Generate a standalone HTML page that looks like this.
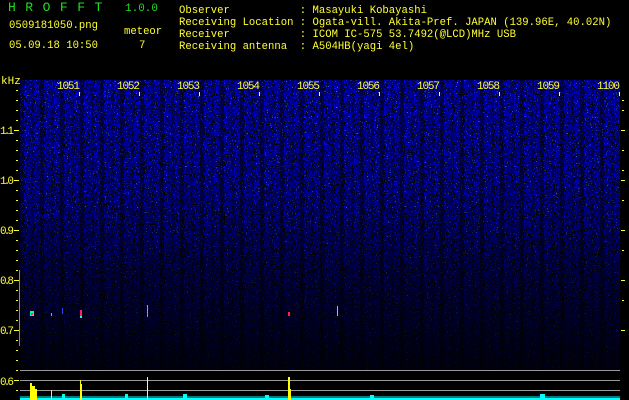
<!DOCTYPE html>
<html><head><meta charset="utf-8"><style>
html,body{margin:0;padding:0;background:#000;width:629px;height:400px;overflow:hidden}
body{position:relative;font-family:"Liberation Mono","DejaVu Sans Mono",monospace;color:#ffff33}
.t{position:absolute;white-space:pre;font-size:10.6px;line-height:12px}
.g{color:#22dd22;font-size:13px}
</style></head><body>
<div class="t g" style="left:8px;top:2px;letter-spacing:9.5px">HROFFT</div>
<div class="t g" style="left:125px;top:3px;font-size:11px">1.0.0</div>
<div class="t" style="left:9px;top:20px">0509181050.png</div>
<div class="t" style="left:124px;top:26px">meteor</div>
<div class="t" style="left:139px;top:40px">7</div>
<div class="t" style="left:9px;top:40px">05.09.18 10:50</div>
<div class="t" style="left:179px;top:5px">Observer           : Masayuki Kobayashi</div>
<div class="t" style="left:179px;top:17px">Receiving Location : Ogata-vill. Akita-Pref. JAPAN (139.96E, 40.02N)</div>
<div class="t" style="left:179px;top:29px">Receiver           : ICOM IC-575 53.7492(@LCD)MHz USB</div>
<div class="t" style="left:179px;top:41px">Receiving antenna  : A504HB(yagi 4el)</div>
<svg width="629" height="400" style="position:absolute;left:0;top:0">
<defs>
<filter id="n" x="0" y="0" width="100%" height="100%">
<feTurbulence type="fractalNoise" baseFrequency="0.9 0.9" numOctaves="1" seed="3"/>
<feColorMatrix values="0 0 0 0 0  0 0 0 0 0  4.5 0 0 0 -1.9  0 0 0 0 1"/>
</filter>
<filter id="s" x="0" y="0" width="100%" height="100%">
<feTurbulence type="fractalNoise" baseFrequency="0.8" numOctaves="1" seed="9"/>
<feColorMatrix values="0 0 0 0 0.1  0 0 0 0 0.75  0 0 0 0 1  0 0 0 30 -21"/>
</filter>
<linearGradient id="fade" x1="0" y1="0" x2="0" y2="1">
<stop offset="0" stop-color="#000" stop-opacity="0.05"/>
<stop offset="0.4" stop-color="#000" stop-opacity="0.25"/>
<stop offset="0.65" stop-color="#000" stop-opacity="0.6"/>
<stop offset="1" stop-color="#000" stop-opacity="0.9"/>
</linearGradient>
<pattern id="str" width="20" height="10" patternUnits="userSpaceOnUse">
<rect x="0" y="0" width="4" height="10" fill="#000" opacity="0.45"/>
<rect x="11" y="0" width="3" height="10" fill="#000" opacity="0.25"/>
</pattern>
</defs>
<rect x="20" y="80" width="600" height="290" fill="#000"/>
<rect x="20" y="80" width="600" height="290" filter="url(#n)"/>
<rect x="20" y="80" width="600" height="290" filter="url(#s)" opacity="0.8"/>
<rect x="20" y="80" width="600" height="290" fill="url(#str)"/>
<rect x="20" y="80" width="600" height="290" fill="url(#fade)"/>
<!-- meteor marks -->
<rect x="30" y="311" width="4" height="5" fill="#00ffaa"/><rect x="31" y="313" width="2" height="2" fill="#ff3355"/>
<rect x="51" y="313" width="1" height="3" fill="#22ee66"/>
<rect x="62" y="308" width="1" height="6" fill="#3344ff"/>
<rect x="80" y="310" width="2" height="6" fill="#ff2266"/><rect x="80" y="316" width="2" height="2" fill="#00ffff"/>
<rect x="147" y="305" width="1" height="12" fill="#ff66aa"/>
<rect x="288" y="312" width="2" height="4" fill="#ff2244"/>
<rect x="337" y="306" width="1" height="10" fill="#ffffff" opacity="0.7"/>
<g fill="#ffff33" font-family="Liberation Mono,monospace" font-size="11">
<text x="1" y="84">kHz</text>
<text x="57" y="89" textLength="23">1051</text><text x="117" y="89" textLength="23">1052</text><text x="177" y="89" textLength="23">1053</text><text x="237" y="89" textLength="23">1054</text><text x="297" y="89" textLength="23">1055</text><text x="357" y="89" textLength="23">1056</text><text x="417" y="89" textLength="23">1057</text><text x="477" y="89" textLength="23">1058</text><text x="537" y="89" textLength="23">1059</text><text x="597" y="89" textLength="23">1100</text>
<text x="0" y="134" textLength="14">1.1</text><text x="0" y="184" textLength="14">1.0</text><text x="0" y="234" textLength="14">0.9</text><text x="0" y="284" textLength="14">0.8</text><text x="0" y="334" textLength="14">0.7</text><text x="0" y="385" textLength="14">0.6</text>
</g>
<g fill="#ffff33">
<rect x="79" y="92" width="1" height="4"/><rect x="139" y="92" width="1" height="4"/><rect x="199" y="92" width="1" height="4"/><rect x="259" y="92" width="1" height="4"/><rect x="319" y="92" width="1" height="4"/><rect x="379" y="92" width="1" height="4"/><rect x="439" y="92" width="1" height="4"/><rect x="499" y="92" width="1" height="4"/><rect x="559" y="92" width="1" height="4"/><rect x="619" y="92" width="1" height="4"/>
<rect x="16" y="90" width="2" height="1"/><rect x="16" y="100" width="2" height="1"/><rect x="16" y="110" width="2" height="1"/><rect x="16" y="120" width="2" height="1"/><rect x="14" y="130" width="5" height="1"/><rect x="16" y="140" width="2" height="1"/><rect x="16" y="150" width="2" height="1"/><rect x="16" y="160" width="2" height="1"/><rect x="16" y="170" width="2" height="1"/><rect x="14" y="180" width="5" height="1"/><rect x="16" y="190" width="2" height="1"/><rect x="16" y="200" width="2" height="1"/><rect x="16" y="210" width="2" height="1"/><rect x="16" y="220" width="2" height="1"/><rect x="14" y="230" width="5" height="1"/><rect x="16" y="240" width="2" height="1"/><rect x="16" y="250" width="2" height="1"/><rect x="16" y="260" width="2" height="1"/><rect x="16" y="270" width="2" height="1"/><rect x="14" y="280" width="5" height="1"/><rect x="16" y="290" width="2" height="1"/><rect x="16" y="300" width="2" height="1"/><rect x="16" y="310" width="2" height="1"/><rect x="16" y="320" width="2" height="1"/><rect x="14" y="330" width="5" height="1"/><rect x="16" y="340" width="2" height="1"/><rect x="16" y="350" width="2" height="1"/><rect x="16" y="360" width="2" height="1"/><rect x="16" y="370" width="2" height="1"/><rect x="14" y="380" width="5" height="1"/><rect x="16" y="390" width="2" height="1"/>
<rect x="622" y="100" width="2" height="1"/><rect x="622" y="110" width="2" height="1"/><rect x="621" y="130" width="4" height="1"/><rect x="622" y="150" width="2" height="1"/><rect x="622" y="170" width="2" height="1"/><rect x="621" y="180" width="4" height="1"/><rect x="622" y="200" width="2" height="1"/><rect x="621" y="230" width="4" height="1"/><rect x="622" y="250" width="2" height="1"/><rect x="621" y="280" width="4" height="1"/><rect x="622" y="300" width="2" height="1"/><rect x="621" y="330" width="4" height="1"/>
</g>
<rect x="19" y="270" width="1" height="76" fill="#888"/>
<g fill="#999"><rect x="20" y="370" width="600" height="1"/><rect x="20" y="380" width="600" height="1"/><rect x="20" y="390" width="600" height="1"/></g>
<rect x="20" y="396" width="600" height="4" fill="#00cccc" opacity="0.6"/>
<rect x="20" y="398" width="600" height="2" fill="#00ffff"/>
<g fill="#00ffff"><rect x="62" y="394" width="3" height="6"/><rect x="125" y="394" width="3" height="6"/><rect x="183" y="394" width="4" height="6"/><rect x="265" y="395" width="4" height="5"/><rect x="370" y="395" width="4" height="5"/><rect x="540" y="394" width="5" height="6"/></g>
<g fill="#ffff00"><rect x="30" y="383" width="2" height="17"/><rect x="32" y="386" width="3" height="14"/><rect x="35" y="389" width="2" height="11"/><rect x="51" y="390" width="1" height="10"/><rect x="80" y="380" width="1" height="20"/><rect x="81" y="384" width="1" height="16"/><rect x="288" y="377" width="2" height="23"/><rect x="290" y="389" width="1" height="11"/></g>
<rect x="147" y="377" width="1" height="23" fill="#ffff66"/>
</svg>
</body></html>
